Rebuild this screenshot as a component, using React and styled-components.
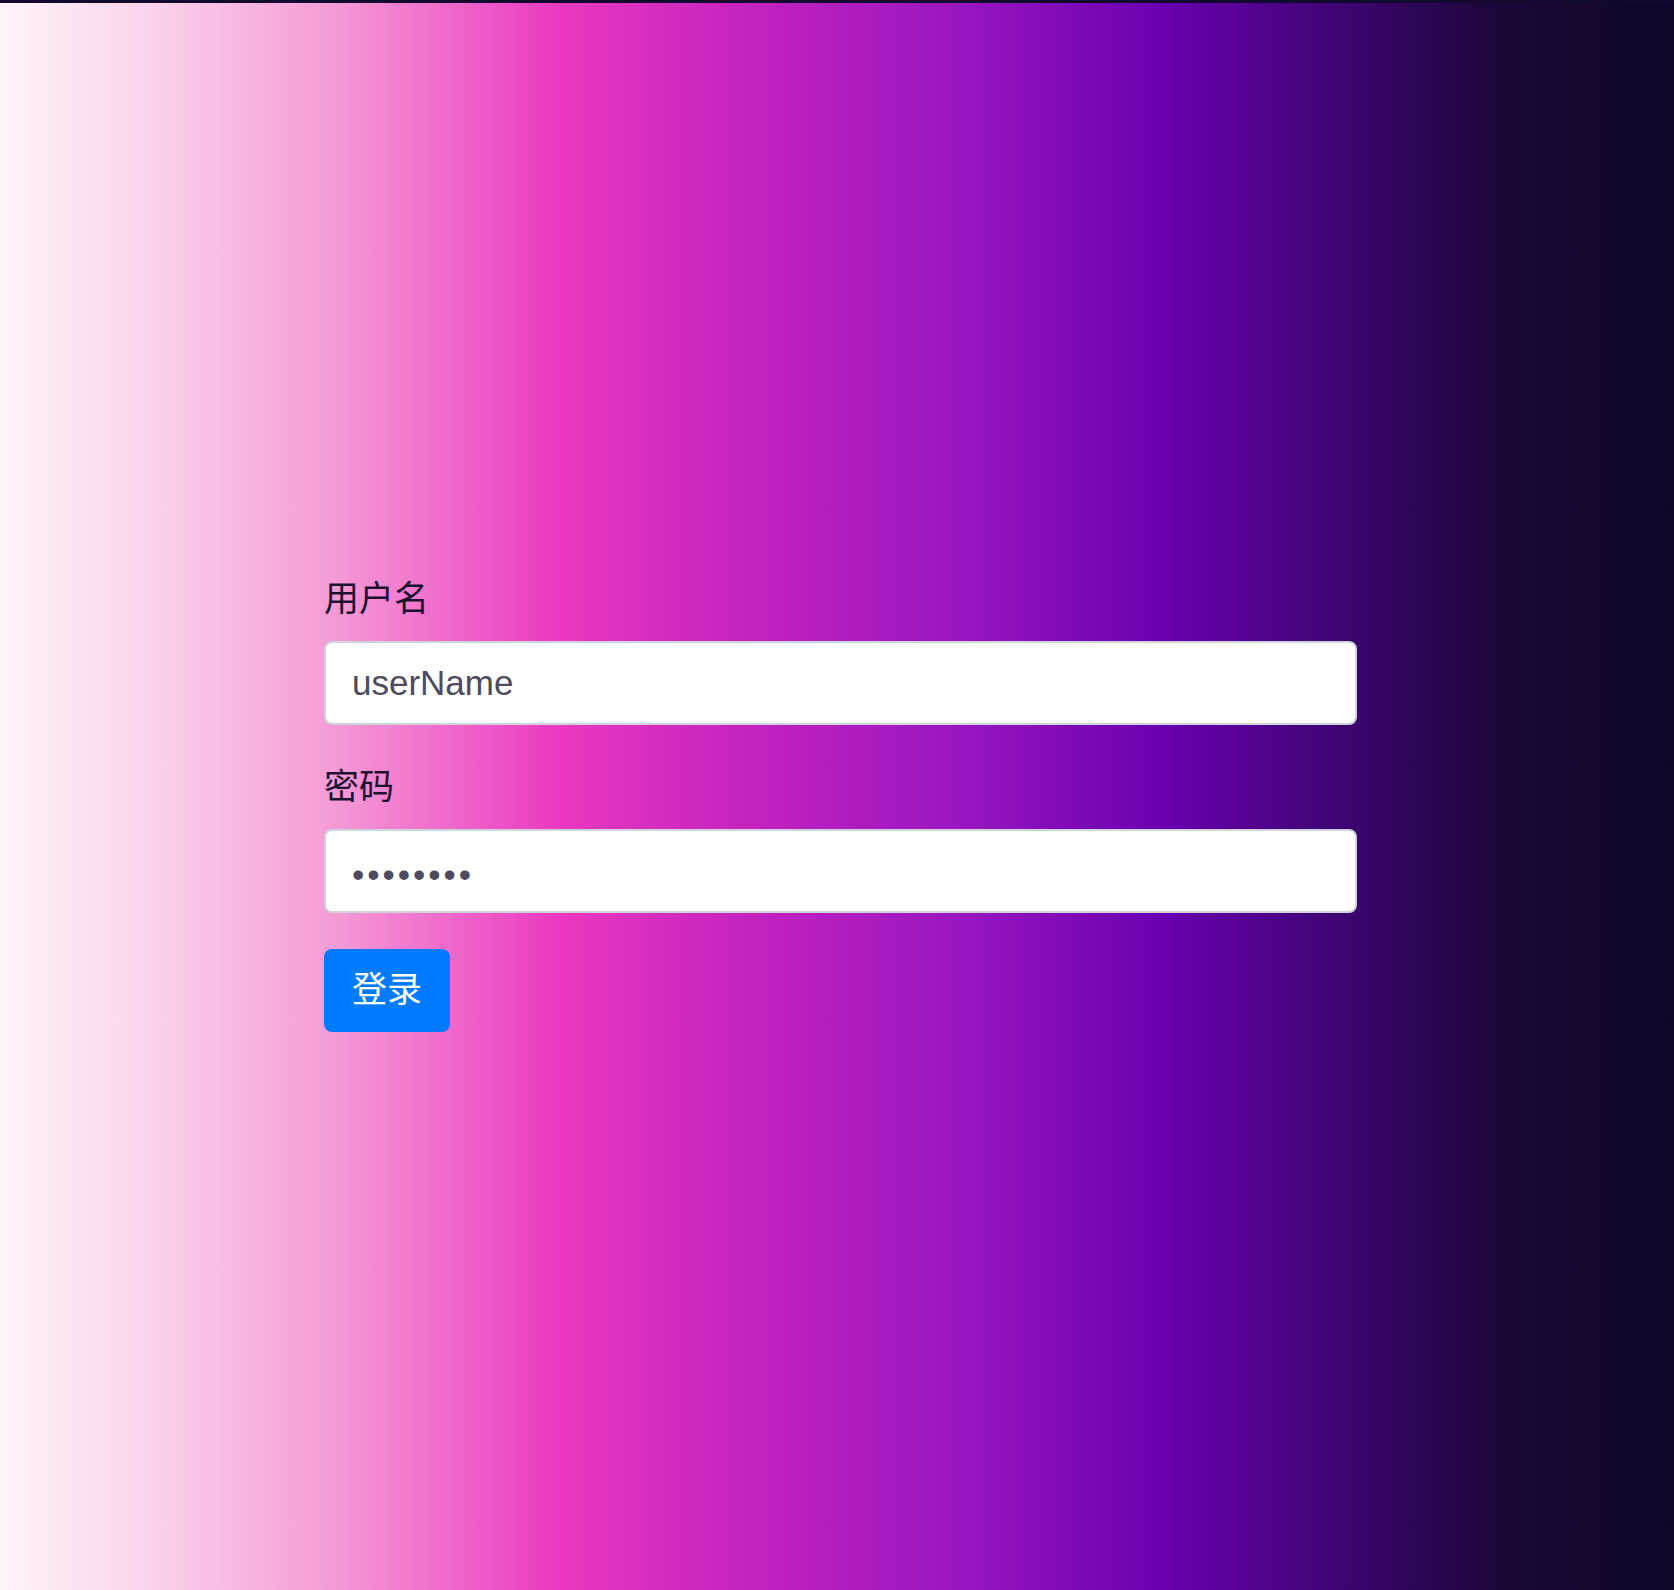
import React from 'react'
import styled, { createGlobalStyle } from 'styled-components'

const GlobalStyle = createGlobalStyle`
    html, body {
        margin: 0;
        padding: 0;
    }
    body {
        font-family: "Liberation Sans", "Noto Sans CJK SC", sans-serif;
        color: #212529;
    }
`

const Page = styled.div`
    min-height: 1590px;
    box-sizing: border-box;
    border-top: 3px solid #120a2e;
    background: linear-gradient(
        to right,
        #fff4fa 0%,
        #fbd3ec 9%,
        #f59ad6 20%,
        #ea38c0 33.5%,
        #c322bf 45%,
        #9a17c0 57%,
        #6a00b0 69.5%,
        #3e0472 80%,
        #1a0736 90%,
        #0f0628 100%
    );
    padding-top: 570px;
`

const Form = styled.form`
    width: 1033px;
    margin-left: 324px;
`

const FormGroup = styled.div`
    margin-bottom: 36px;
`

const Label = styled.label`
    display: block;
    font-size: 35px;
    line-height: 51px;
    margin-bottom: 17px;
    color: #1d1030;
`

const Input = styled.input`
    display: block;
    width: 100%;
    height: 84px;
    box-sizing: border-box;
    padding: ${props => (props.type === 'password' ? '8px 26px 0' : '0 26px')};
    font-family: "Liberation Sans", "Noto Sans CJK SC", sans-serif;
    font-size: 35px;
    color: #4f4b5e;
    background: #fff;
    border: 2px solid #ced4da;
    border-radius: 8px;
    outline: none;
    letter-spacing: ${props => (props.type === 'password' ? '3px' : 'normal')};
`

const Button = styled.button`
    display: inline-block;
    height: 83px;
    box-sizing: border-box;
    padding: 0 26px 8px;
    font-family: "Liberation Sans", "Noto Sans CJK SC", sans-serif;
    font-size: 35px;
    color: #fff;
    background-color: #007bff;
    border: 2px solid #007bff;
    border-radius: 8px;
    cursor: pointer;
`

const App = () => {
    return (
        <>
            <GlobalStyle />
            <Page>
                <Form onSubmit={e => e.preventDefault()}>
                    <FormGroup>
                        <Label htmlFor="userName">用户名</Label>
                        <Input id="userName" type="text" defaultValue="userName" />
                    </FormGroup>
                    <FormGroup>
                        <Label htmlFor="password">密码</Label>
                        <Input id="password" type="password" defaultValue="password" />
                    </FormGroup>
                    <Button type="submit">登录</Button>
                </Form>
            </Page>
        </>
    )
}

export default App
